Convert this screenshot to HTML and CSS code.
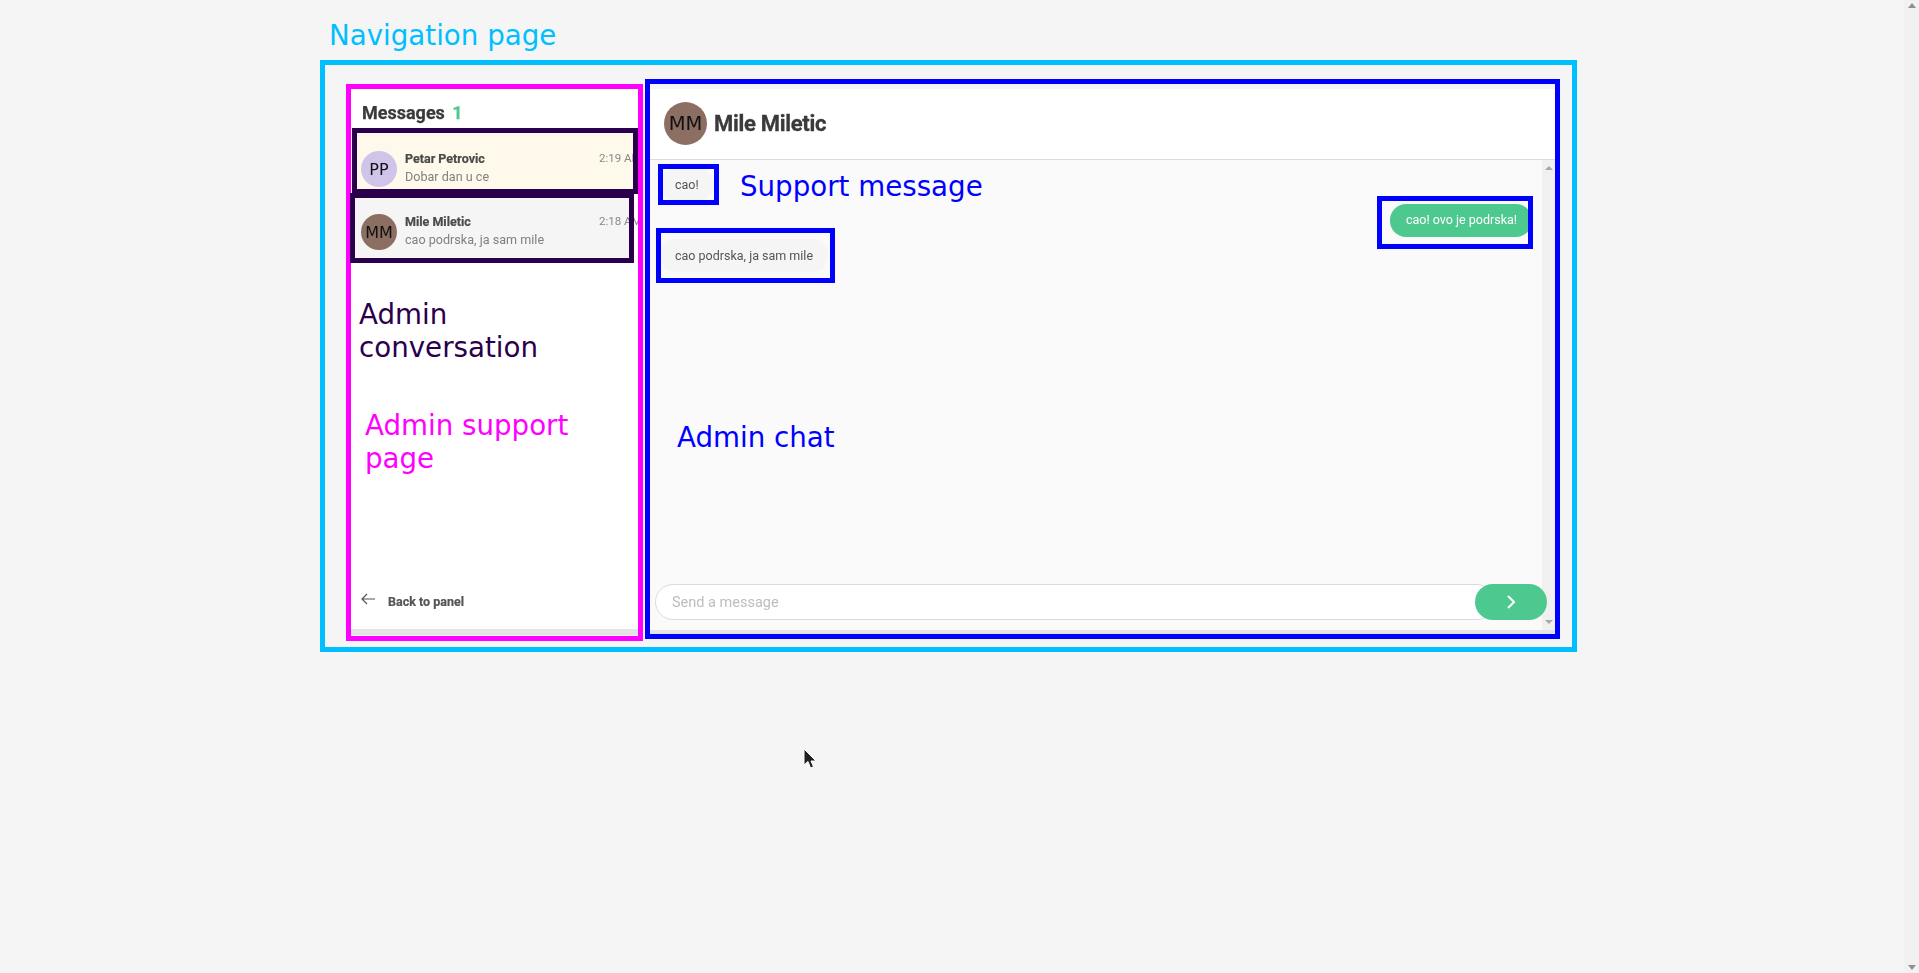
FILE: index.html
```html
<!DOCTYPE html>
<html lang="en">
<head>
<meta charset="utf-8">
<title>Navigation page</title>
<link rel="stylesheet" href="styles.css">
</head>
<body>
<div class="viewport">
  <div class="app">
    <aside class="sidebar">
      <h2 class="sidebar-title">Messages <span class="count">1</span></h2>
      <div class="conv conv-unread">
        <div class="avatar avatar-pp">PP</div>
        <div class="conv-text">
          <div class="conv-name">Petar Petrovic</div>
          <div class="conv-snippet">Dobar dan u ce</div>
        </div>
        <div class="conv-time">2:19 AM</div>
      </div>
      <div class="conv conv-read">
        <div class="avatar avatar-mm">MM</div>
        <div class="conv-text">
          <div class="conv-name">Mile Miletic</div>
          <div class="conv-snippet">cao podrska, ja sam mile</div>
        </div>
        <div class="conv-time">2:18 AM</div>
      </div>
      <div class="back">
        <svg class="back-icon" width="14" height="12" viewBox="0 0 14 12" fill="none" stroke="#555" stroke-width="1.2"><path d="M14 6H1M6 1 1 6l5 5"/></svg>
        <span>Back to panel</span>
      </div>
    </aside>
    <section class="chat">
      <header class="chat-header">
        <div class="avatar avatar-mm avatar-large">MM</div>
        <div class="chat-name">Mile Miletic</div>
      </header>
      <div class="chat-body">
        <div class="track">
          <span class="tri-up tri-gray"></span>
          <span class="tri-down tri-gray"></span>
        </div>
        <div class="bubble">cao!</div>
        <div class="bubble bubble-own">cao! ovo je podrska!</div>
        <div class="bubble">cao podrska, ja sam mile</div>
        <div class="composer">
          <input class="composer-input" type="text" placeholder="Send a message">
          <button class="composer-send" type="button" aria-label="Send">
            <svg width="10" height="14" viewBox="0 0 10 14" fill="none" stroke="#fff" stroke-width="2"><path d="M2 1l6 6-6 6"/></svg>
          </button>
        </div>
      </div>
    </section>
  </div>

  <div class="frame frame-nav"></div>
  <div class="frame frame-support"></div>
  <div class="frame frame-chat"></div>
  <div class="frame frame-conv1"></div>
  <div class="frame frame-conv2"></div>
  <div class="frame frame-msg1"></div>
  <div class="frame frame-msg2"></div>
  <div class="frame frame-msg3"></div>

  <div class="note note-nav">Navigation page</div>
  <div class="note note-conv">Admin<br>conversation</div>
  <div class="note note-support">Admin support<br>page</div>
  <div class="note note-msg">Support message</div>
  <div class="note note-chat">Admin chat</div>

  <svg class="cursor" width="14" height="24" viewBox="0 0 14 24"><path d="M1 1v16l4-3.5L7.5 20l3-1.3L8 13h5z" fill="#222" stroke="#fff" stroke-width="1"/></svg>
</div>
<div class="page-scrollbar">
  <span class="tri-up tri-dark"></span>
  <span class="tri-down tri-dark"></span>
</div>
</body>
</html>
```
FILE: styles.css
```css
* { box-sizing: border-box; }
html, body { margin: 0; height: 100%; overflow: hidden; }
body {
  display: flex;
  background: #f5f5f5;
  font-family: Roboto, "Liberation Sans", sans-serif;
}
.viewport {
  position: relative;
  flex: 1;
  height: 973px;
  padding: 89px 0 0 351px;
}
.page-scrollbar {
  width: 15px;
  height: 973px;
  background: #f1f1f1;
  display: flex;
  flex-direction: column;
  justify-content: space-between;
  align-items: center;
  padding: 3px 0;
}

/* triangles */
.tri-up, .tri-down { display: block; width: 0; height: 0; border-left: 4px solid transparent; border-right: 4px solid transparent; }
.tri-up.tri-dark { border-bottom: 5px solid #8f8f8f; }
.tri-down.tri-dark { border-top: 5px solid #8f8f8f; }
.tri-up.tri-gray { border-bottom: 4px solid #a8a8a8; }
.tri-down.tri-gray { border-top: 4px solid #a8a8a8; }

/* app */
.app {
  display: flex;
  gap: 11px;
  height: 546px;
  filter: blur(0.4px);
}
.sidebar {
  width: 288px;
  display: flex;
  flex-direction: column;
  background: #fff;
  border-bottom: 6px solid #e4e4e4;
  overflow: hidden;
}
.sidebar-title {
  margin: 0;
  height: 43px;
  padding: 13px 0 0 11px;
  font-size: 18px;
  line-height: 21px;
  font-weight: 700;
  color: #3a3a3a;
  -webkit-text-stroke: 0.25px #3a3a3a;
}
.count { color: #4dc98f; margin-left: 3px; -webkit-text-stroke: 0.25px #4dc98f; }
.conv {
  display: flex;
  align-items: flex-start;
  width: 283px;
  height: 63px;
  padding: 18px 0 0 10px;
}
.conv-unread { background: #fff9ec; }
.conv-read { background: #f5f5f5; }
.avatar {
  flex: none;
  width: 36px;
  height: 36px;
  margin-top: 1px;
  border-radius: 50%;
  display: flex;
  align-items: center;
  justify-content: center;
  font-family: "DejaVu Sans", sans-serif;
  font-size: 16px;
  color: #111;
}
.avatar-pp { background: #d1c4e9; }
.avatar-mm { background: #8d6e63; }
.avatar-large { width: 43px; height: 43px; margin: 0; font-size: 19.5px; }
.conv-text { flex: 1; margin-left: 8px; min-width: 0; }
.conv-name {
  padding-top: 1px;
  font-size: 12.5px;
  line-height: 16px;
  font-weight: 700;
  color: #4a4a4a;
  -webkit-text-stroke: 0.2px #4a4a4a;
}
.conv-snippet {
  margin-top: 2px;
  font-size: 12.6px;
  line-height: 16px;
  color: #808080;
  white-space: nowrap;
}
.conv-time {
  flex: none;
  width: 35px;
  font-size: 11.5px;
  line-height: 16px;
  color: #888;
  white-space: nowrap;
}
.back {
  margin-top: auto;
  display: flex;
  align-items: center;
  padding: 0 0 18px 10px;
  font-size: 12.5px;
  line-height: 19px;
  font-weight: 700;
  color: #555;
  -webkit-text-stroke: 0.2px #555;
}
.back-icon { margin: 0 13px 5px 0; }

.chat {
  width: 905px;
  display: flex;
  flex-direction: column;
  border-bottom: 5px solid #e4e4e4;
}
.chat-header {
  display: flex;
  align-items: center;
  gap: 7px;
  height: 71px;
  padding: 0 0 1px 14px;
  background: #fff;
  border-bottom: 1px solid #dcdcdc;
}
.chat-name {
  font-size: 22px;
  font-weight: 700;
  color: #3a3a3a;
  letter-spacing: -0.3px;
  -webkit-text-stroke: 0.3px #3a3a3a;
}
.chat-body {
  position: relative;
  flex: 1;
  display: flex;
  flex-direction: column;
  align-items: flex-start;
  gap: 2.5px;
  padding: 8px 8px 10px 5px;
  background: #fafafa;
}
.track {
  position: absolute;
  top: 0;
  right: 0;
  bottom: 0;
  width: 13px;
  background: #f0f0f0;
  display: flex;
  flex-direction: column;
  justify-content: space-between;
  align-items: center;
  padding: 6px 0 6px;
}
.bubble {
  margin-left: 5px;
  padding: 1px 15px 0;
  height: 33px;
  line-height: 32px;
  border-radius: 16px;
  background: #f5f5f5;
  font-size: 12.5px;
  color: #555;
  white-space: nowrap;
}
.bubble-own {
  position: relative;
  align-self: flex-end;
  margin: 0 15px 0 0;
  padding-top: 0;
  padding-left: 16px;
  background: #4dc98f;
  color: #fff;
}
.composer {
  position: relative;
  align-self: stretch;
  margin-top: auto;
  display: flex;
  height: 36px;
}
.composer-input {
  flex: 1;
  min-width: 0;
  margin-right: -20px;
  padding: 0 30px 0 16px;
  border: 1px solid #dcdcdc;
  border-radius: 18px;
  background: #fff;
  font-family: Roboto, sans-serif;
  font-size: 14.5px;
  outline: none;
}
.composer-input::placeholder { color: #bdbdbd; opacity: 1; }
.composer-send {
  position: relative;
  width: 72px;
  border: 0;
  border-radius: 18px;
  background: #4dc98f;
  padding: 0 0 1px;
  display: flex;
  align-items: center;
  justify-content: center;
}

/* annotation rectangles drawn over the screenshot */
.frame { position: absolute; border: 5px solid; }
.frame-nav { left: 320px; top: 60px; width: 1257px; height: 592px; border-color: #00bfff; }
.frame-support { left: 346px; top: 84px; width: 297px; height: 557px; border-color: #ff00ff; }
.frame-chat { left: 645px; top: 79px; width: 915px; height: 560px; border-color: #0000ff; }
.frame-conv1 { left: 352px; top: 128px; width: 286px; height: 66px; border-color: #2a004d; }
.frame-conv2 { left: 350px; top: 193px; width: 284px; height: 70px; border-color: #2a004d; }
.frame-msg1 { left: 658px; top: 164px; width: 61px; height: 41px; border-color: #0000ff; }
.frame-msg2 { left: 656px; top: 228px; width: 179px; height: 55px; border-color: #0000ff; }
.frame-msg3 { left: 1377px; top: 196px; width: 156px; height: 53px; border-color: #0000ff; }

.note {
  position: absolute;
  font-family: "DejaVu Sans", sans-serif;
  font-size: 27.7px;
  line-height: 33px;
  white-space: nowrap;
}
.note-nav { left: 329px; top: 19px; color: #00bfff; }
.note-conv { left: 359px; top: 298px; color: #2a004d; }
.note-support { left: 365px; top: 409px; color: #ff00ff; }
.note-msg { left: 740px; top: 170px; color: #0000ff; }
.note-chat { left: 677px; top: 421px; color: #0000ff; }

.cursor { position: absolute; left: 803px; top: 748px; }
```
